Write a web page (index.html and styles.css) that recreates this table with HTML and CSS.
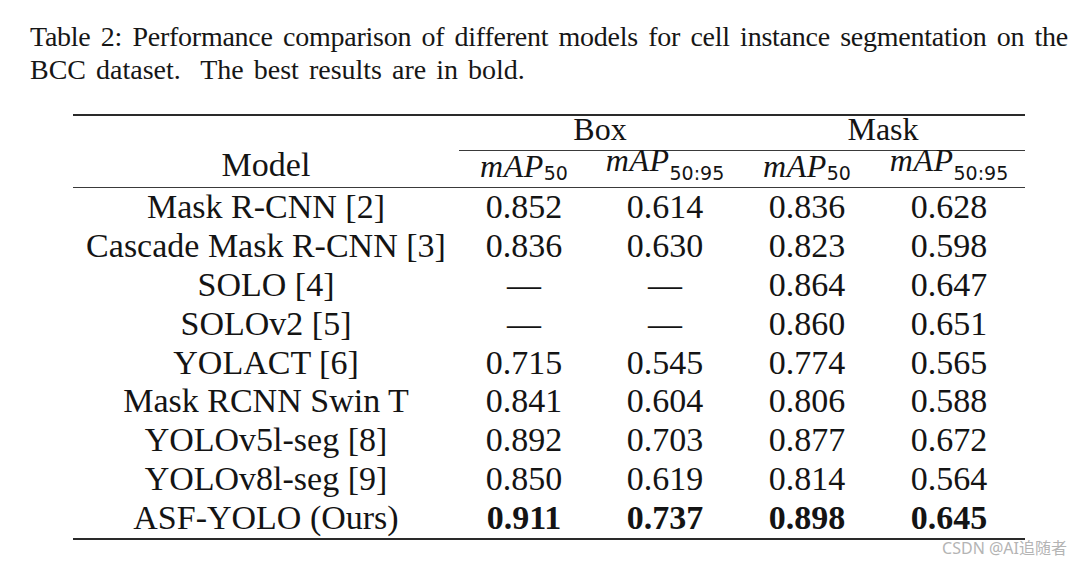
FILE: index.html
```html
<!DOCTYPE html>
<html lang="en">
<head>
<meta charset="utf-8">
<title>Table 2</title>
<link rel="stylesheet" href="styles.css">
</head>
<body>
<div class="page">
  <div class="caption">
    <div class="cap-line cap-first">Table 2: Performance comparison of different models for cell instance segmentation on the</div>
    <div class="cap-line cap-second">BCC dataset.&nbsp; The best results are in bold.</div>
  </div>
  <table class="results">
    <colgroup>
      <col class="c-model">
      <col class="c-a">
      <col class="c-b">
      <col class="c-c">
      <col class="c-d">
    </colgroup>
    <thead>
      <tr class="group-row">
        <th class="model-head" rowspan="2">Model</th>
        <th class="group" colspan="2">Box</th>
        <th class="group" colspan="2">Mask</th>
      </tr>
      <tr class="metric-row">
        <th class="metric"><span class="map">mAP</span><span class="sub">50</span></th>
        <th class="metric"><span class="map raised">mAP</span><span class="sub">50:95</span></th>
        <th class="metric"><span class="map">mAP</span><span class="sub">50</span></th>
        <th class="metric"><span class="map raised">mAP</span><span class="sub">50:95</span></th>
      </tr>
    </thead>
    <tbody>
      <tr><td class="name">Mask R-CNN [2]</td><td>0.852</td><td>0.614</td><td>0.836</td><td>0.628</td></tr>
      <tr><td class="name">Cascade Mask R-CNN [3]</td><td>0.836</td><td>0.630</td><td>0.823</td><td>0.598</td></tr>
      <tr><td class="name">SOLO [4]</td><td>—</td><td>—</td><td>0.864</td><td>0.647</td></tr>
      <tr><td class="name">SOLOv2 [5]</td><td>—</td><td>—</td><td>0.860</td><td>0.651</td></tr>
      <tr><td class="name">YOLACT [6]</td><td>0.715</td><td>0.545</td><td>0.774</td><td>0.565</td></tr>
      <tr><td class="name">Mask RCNN Swin T</td><td>0.841</td><td>0.604</td><td>0.806</td><td>0.588</td></tr>
      <tr><td class="name">YOLOv5l-seg [8]</td><td>0.892</td><td>0.703</td><td>0.877</td><td>0.672</td></tr>
      <tr><td class="name">YOLOv8l-seg [9]</td><td>0.850</td><td>0.619</td><td>0.814</td><td>0.564</td></tr>
      <tr class="last"><td class="name">ASF-YOLO (Ours)</td><td class="best">0.911</td><td class="best">0.737</td><td class="best">0.898</td><td class="best">0.645</td></tr>
    </tbody>
  </table>
</div>
<div class="watermark">CSDN @AI追随者</div>
</body>
</html>
```

FILE: styles.css
```css
html, body {
  margin: 0;
  padding: 0;
  background: #ffffff;
}

body {
  width: 1080px;
  height: 563px;
  overflow: hidden;
  position: relative;
  color: #111111;
}

.page {
  display: flex;
  flex-direction: column;
  padding: 20px 0 0 0;
}

.caption {
  margin-left: 30px;
  width: 1038px;
  font-family: "Liberation Serif", "Times New Roman", serif;
  font-size: 28px;
  line-height: 33px;
  color: #161616;
}

.cap-line {
  white-space: nowrap;
}

.cap-first {
  text-align: justify;
  text-align-last: justify;
  letter-spacing: -0.25px;
}

.cap-second {
  word-spacing: 3px;
}

.results {
  margin: 28px 0 0 73px;
  width: 952px;
  table-layout: fixed;
  border-collapse: separate;
  border-spacing: 0;
  border-top: 2px solid #2a2a2a;
  border-bottom: 2px solid #2a2a2a;
  font-family: "Liberation Serif", "Times New Roman", serif;
  color: #141414;
}

.c-model { width: 386px; }
.c-a { width: 130px; }
.c-b { width: 152px; }
.c-c { width: 132px; }
.c-d { width: 152px; }

.results th,
.results td {
  padding: 0;
  text-align: center;
  font-weight: normal;
  white-space: nowrap;
}

.group {
  font-size: 32px;
  line-height: 26px;
  padding-bottom: 8px !important;
  border-bottom: 1px solid #3a3a3a;
}

.model-head {
  font-size: 34px;
  line-height: 36px;
  vertical-align: bottom;
  padding-bottom: 4px !important;
  border-bottom: 1px solid #3a3a3a;
}

.metric {
  font-size: 32px;
  line-height: 30px;
  height: 30px;
  padding-bottom: 6px !important;
  border-bottom: 1px solid #3a3a3a;
}

.map {
  font-style: italic;
  letter-spacing: 0.5px;
  line-height: 0;
}

.map.raised {
  vertical-align: 6px;
}

.sub {
  font-family: "DejaVu Sans", sans-serif;
  font-size: 19px;
  line-height: 0;
  vertical-align: -3px;
  letter-spacing: 0;
}

.results td {
  font-size: 34px;
  line-height: 36px;
  padding-top: 1px;
  padding-bottom: 1.9px;
}

.results td.best {
  font-weight: bold;
}

.watermark {
  position: absolute;
  right: 13px;
  bottom: 6px;
  font-family: "Noto Sans", "Noto Sans CJK SC", sans-serif;
  font-size: 16px;
  line-height: 18px;
  color: #b4b4b4;
}
```
